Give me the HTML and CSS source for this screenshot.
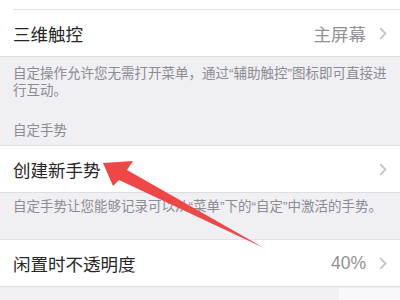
FILE: index.html
```html
<!DOCTYPE html>
<html lang="zh-CN">
<head>
<meta charset="utf-8">
<link rel="stylesheet" href="styles.css">
</head>
<body>
<div class="page">
  <div class="group">
    <div class="partial"></div>
    <div class="sep"></div>
    <div class="row">
      <span class="label">三维触控</span>
      <span class="value">主屏幕</span>
      <svg class="chev" width="8" height="13" viewBox="0 0 8 13"><path d="M1.2 1.2 L6.5 6.5 L1.2 11.8" fill="none" stroke="#c4c4c9" stroke-width="1.8"/></svg>
    </div>
  </div>
  <div class="footer">自定操作允许您无需打开菜单，通过“辅助触控”图标即可直接进行互动。</div>
  <div class="header">自定手势</div>
  <div class="group">
    <div class="row">
      <span class="label">创建新手势</span>
      <span class="value"></span>
      <svg class="chev" width="8" height="13" viewBox="0 0 8 13"><path d="M1.2 1.2 L6.5 6.5 L1.2 11.8" fill="none" stroke="#c4c4c9" stroke-width="1.8"/></svg>
    </div>
  </div>
  <div class="footer footer-tight">自定手势让您能够记录可以从“菜单”下的“自定”中激活的手势。</div>
  <div class="group group-gap">
    <div class="row">
      <span class="label">闲置时不透明度</span>
      <span class="value">40%</span>
      <svg class="chev" width="8" height="13" viewBox="0 0 8 13"><path d="M1.2 1.2 L6.5 6.5 L1.2 11.8" fill="none" stroke="#c4c4c9" stroke-width="1.8"/></svg>
    </div>
  </div>
  <div class="watermark"></div>
  <svg class="arrow" width="400" height="300" viewBox="0 0 400 300">
    <polygon points="103,163 133,161 127,170 264,248 119,180 113,186" fill="#ef4646"/>
  </svg>
</div>
</body>
</html>
```

FILE: styles.css
```css
html, body {
  margin: 0;
  padding: 0;
}
body {
  background: #efeff4;
  font-family: "Liberation Sans", "Noto Sans CJK SC", sans-serif;
  width: 400px;
  height: 300px;
  overflow: hidden;
}
.page {
  position: relative;
  width: 400px;
  height: 300px;
}
.group {
  background: #ffffff;
  border-bottom: 1px solid #dedee2;
}
.group-gap {
  border-top: 1px solid #e2e2e6;
  margin-top: 24px;
}
.partial {
  height: 9px;
}
.sep {
  height: 1px;
  margin-left: 13px;
  background: #e4e4e8;
}
.row {
  height: 46px;
  display: flex;
  align-items: center;
  padding: 0 13px;
}
.label {
  font-size: 17.5px;
  color: #262626;
  flex: 1;
}
.value {
  font-size: 17.5px;
  color: #909095;
  margin-right: 13px;
}
.chev {
  display: block;
}
.footer {
  font-size: 13.5px;
  line-height: 17px;
  color: #8c8c91;
  padding: 8px 10px 0 13px;
}
.footer-tight {
  padding-top: 5px;
}
.header {
  font-size: 13.5px;
  line-height: 17px;
  color: #8c8c91;
  padding: 23px 13px 6px;
  border-bottom: 1px solid #e2e2e6;
}
.watermark {
  position: absolute;
  left: 339px;
  top: 288px;
  width: 61px;
  height: 12px;
  background: rgba(255, 255, 255, 0.55);
}
.arrow {
  position: absolute;
  left: 0;
  top: 0;
}
```
